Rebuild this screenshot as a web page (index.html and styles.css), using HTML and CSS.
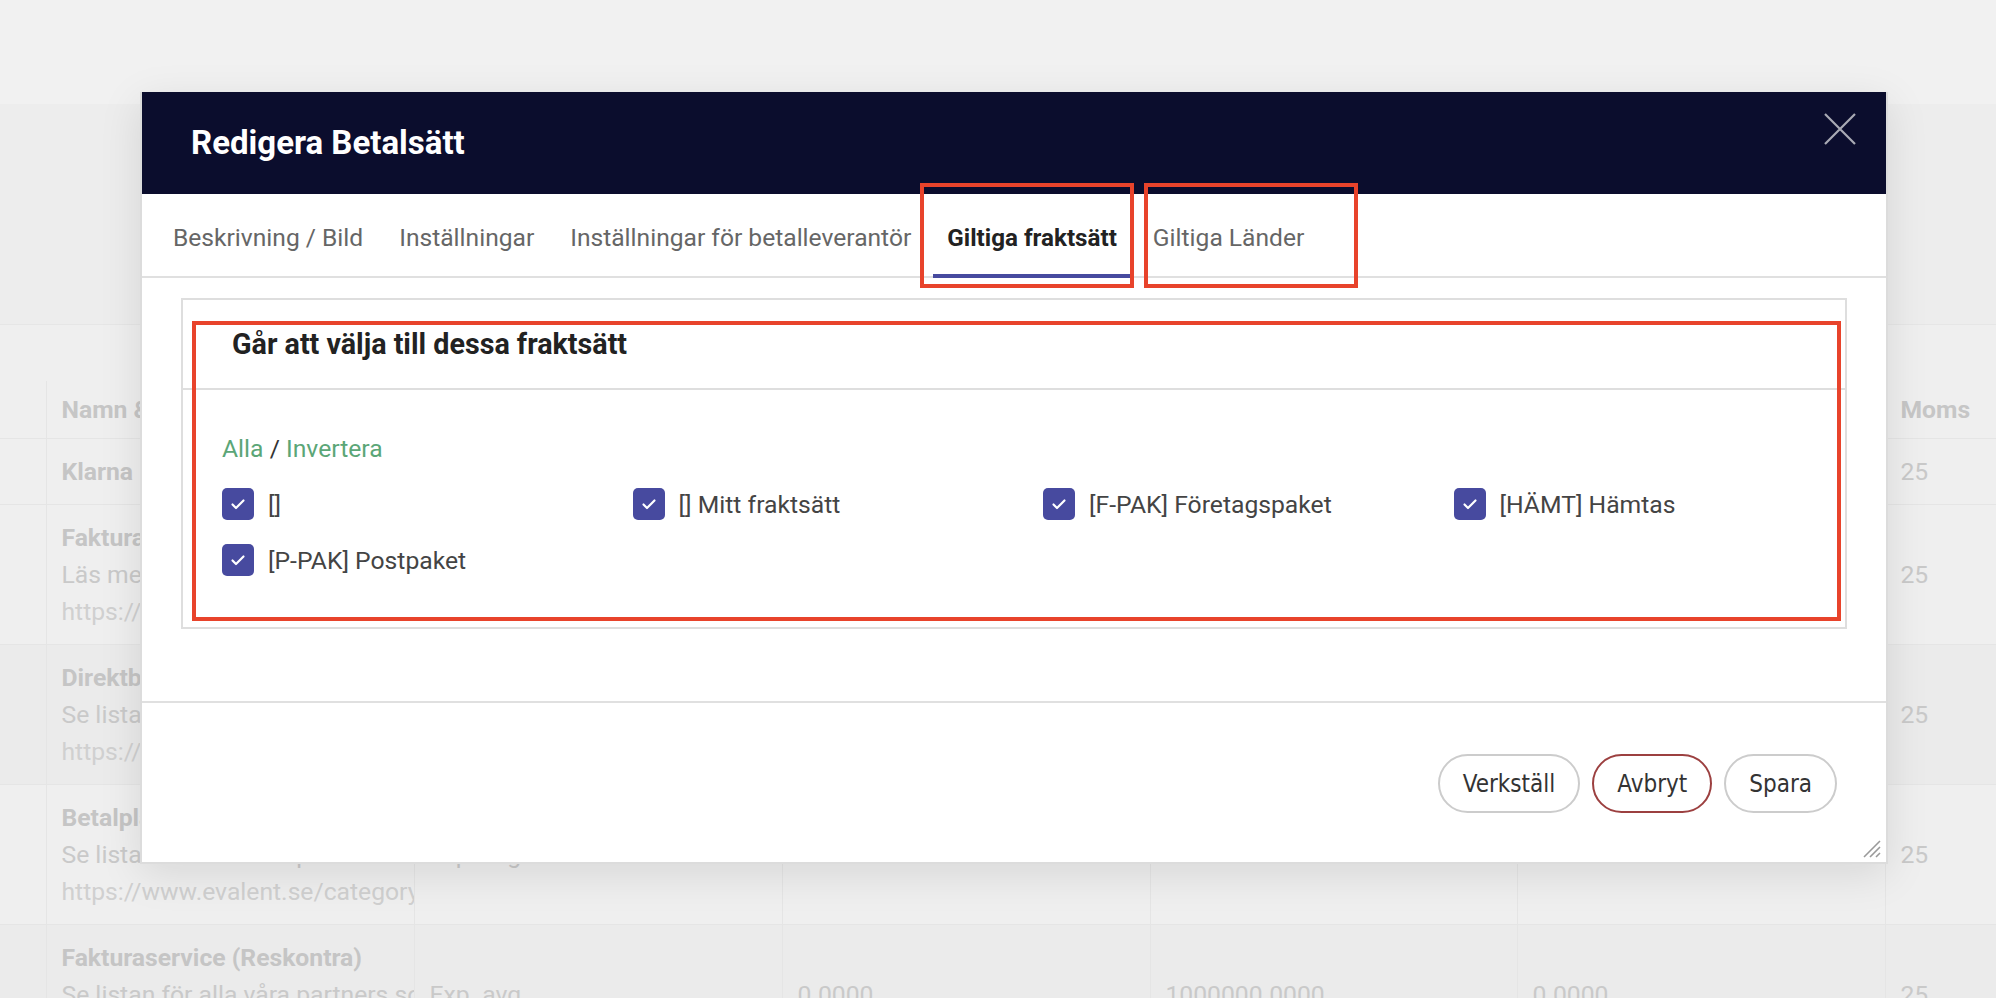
FILE: index.html
```html
<!DOCTYPE html>
<html lang="sv">
<head>
<meta charset="utf-8">
<title>Redigera Betalsätt</title>
<link rel="stylesheet" href="styles.css">
</head>
<body>
<div class="app">
  <div class="topbar"></div>
  <div class="band"></div>
  <div class="list">
    <table class="bg-table">
      <colgroup>
        <col class="c0"><col class="c1"><col class="c2"><col class="c3"><col class="c4"><col class="c5"><col class="c6">
      </colgroup>
      <tr class="head">
        <td></td><td>Namn &amp; beskrivning</td><td>Avgiftstyp</td><td>Min belopp</td><td>Max belopp</td><td>Avgift</td><td>Moms</td>
      </tr>
      <tr>
        <td></td><td><div class="name">Klarna</div></td><td>Exp. avg.</td><td>0.0000</td><td>1000000.0000</td><td>0.0000</td><td>25</td>
      </tr>
      <tr class="alt">
        <td></td><td><div class="name">Fakturabetalning</div><div class="desc">Läs mer om våra villkor</div><div class="url">https://www.evalent.se/villkor</div></td><td>Exp. avg.</td><td>0.0000</td><td>1000000.0000</td><td>0.0000</td><td>25</td>
      </tr>
      <tr class="dark">
        <td></td><td><div class="name">Direktbetalning</div><div class="desc">Se listan för alla våra partners som</div><div class="url">https://www.evalent.se/category</div></td><td>Exp. avg.</td><td>0.0000</td><td>1000000.0000</td><td>0.0000</td><td>25</td>
      </tr>
      <tr class="alt">
        <td></td><td><div class="name">Betalplan</div><div class="desc">Se listan för alla våra partners som</div><div class="url">https://www.evalent.se/category</div></td><td>Exp. avg.</td><td>0.0000</td><td>1000000.0000</td><td>0.0000</td><td>25</td>
      </tr>
      <tr class="dark">
        <td></td><td><div class="name">Fakturaservice (Reskontra)</div><div class="desc">Se listan för alla våra partners som</div><div class="url">https://www.evalent.se/category</div></td><td>Exp. avg.</td><td>0.0000</td><td>1000000.0000</td><td>0.0000</td><td>25</td>
      </tr>
    </table>
  </div>
</div>

<div class="modal">
  <div class="modal-head">
    <h1 class="modal-title">Redigera Betalsätt</h1>
    <button class="close" aria-label="Stäng">
      <svg width="32" height="32" viewBox="0 0 32 32"><path d="M1 1 L31 31 M31 1 L1 31" stroke="#a9aab4" stroke-width="2.2" fill="none"/></svg>
    </button>
  </div>
  <div class="tabs">
    <div class="tab">Beskrivning / Bild</div>
    <div class="tab">Inställningar</div>
    <div class="tab">Inställningar för betalleverantör</div>
    <div class="tab active">Giltiga fraktsätt</div>
    <div class="tab">Giltiga Länder</div>
  </div>
  <div class="modal-body">
    <div class="panel">
      <div class="panel-head">Går att välja till dessa fraktsätt</div>
      <div class="panel-body">
        <div class="links"><span class="link">Alla</span> / <span class="link">Invertera</span></div>
        <div class="checks">
          <label class="check"><span class="box"><svg width="32" height="32" viewBox="0 0 32 32"><path d="M10.5 16.5 L14 20 L21.5 12.5" stroke="#fff" stroke-width="2.2" fill="none" stroke-linecap="round" stroke-linejoin="round"/></svg></span><span class="lbl">[]</span></label>
          <label class="check"><span class="box"><svg width="32" height="32" viewBox="0 0 32 32"><path d="M10.5 16.5 L14 20 L21.5 12.5" stroke="#fff" stroke-width="2.2" fill="none" stroke-linecap="round" stroke-linejoin="round"/></svg></span><span class="lbl">[] Mitt fraktsätt</span></label>
          <label class="check"><span class="box"><svg width="32" height="32" viewBox="0 0 32 32"><path d="M10.5 16.5 L14 20 L21.5 12.5" stroke="#fff" stroke-width="2.2" fill="none" stroke-linecap="round" stroke-linejoin="round"/></svg></span><span class="lbl">[F-PAK] Företagspaket</span></label>
          <label class="check"><span class="box"><svg width="32" height="32" viewBox="0 0 32 32"><path d="M10.5 16.5 L14 20 L21.5 12.5" stroke="#fff" stroke-width="2.2" fill="none" stroke-linecap="round" stroke-linejoin="round"/></svg></span><span class="lbl">[HÄMT] Hämtas</span></label>
          <label class="check"><span class="box"><svg width="32" height="32" viewBox="0 0 32 32"><path d="M10.5 16.5 L14 20 L21.5 12.5" stroke="#fff" stroke-width="2.2" fill="none" stroke-linecap="round" stroke-linejoin="round"/></svg></span><span class="lbl">[P-PAK] Postpaket</span></label>
        </div>
      </div>
    </div>
  </div>
  <div class="modal-foot">
    <button class="btn">Verkställ</button>
    <button class="btn btn-cancel">Avbryt</button>
    <button class="btn">Spara</button>
  </div>
  <svg class="resize" width="20" height="20" viewBox="0 0 20 20"><path d="M19 3 L3 19 M19 9 L9 19 M19 15 L15 19" stroke="#9a9a9a" stroke-width="1.6" fill="none"/></svg>
</div>

<div class="mark mark-tab1"></div>
<div class="mark mark-tab2"></div>
<div class="mark mark-panel"></div>
</body>
</html>
```

FILE: styles.css
```css
* { box-sizing: border-box; }

html, body {
  margin: 0;
  padding: 0;
}

body {
  width: 1996px;
  height: 998px;
  overflow: hidden;
  position: relative;
  background: #eeeeee;
  font-family: Roboto, "Liberation Sans", sans-serif;
}

/* ---------- dimmed page behind the dialog ---------- */
.topbar {
  height: 104px;
  background: #f1f1f1;
}

.band {
  height: 221px;
  background: #ededed;
  border-bottom: 1px solid #e6e6e6;
}

.list {
  padding-top: 56px;
  background: #efefef;
}

.bg-table {
  width: 1996px;
  border-collapse: collapse;
  table-layout: fixed;
}

.c0 { width: 46px; }
.c1 { width: 368px; }
.c2 { width: 368px; }
.c3 { width: 368px; }
.c4 { width: 367px; }
.c5 { width: 368px; }
.c6 { width: 111px; }

.bg-table td {
  padding: 14px 15px;
  font-size: 24.7px;
  line-height: 37px;
  color: #c9c9c9;
  vertical-align: middle;
  white-space: nowrap;
  overflow: hidden;
  border-top: 1px solid #e5e5e5;
  border-left: 1px solid #e5e5e5;
}

.bg-table td:first-child { border-left: none; }

.bg-table .head td {
  padding: 10px 15px;
  font-weight: 700;
  color: #c6c6c6;
  border-top: none;
}

.bg-table tr.alt td { background: #efefef; }
.bg-table tr.dark td { background: #ebebeb; }

.name {
  font-weight: 700;
  color: #c5c5c5;
}

.desc { color: #c9c9c9; }
.url { color: #d0d0d0; }

/* ---------- dialog ---------- */
.modal {
  position: absolute;
  left: 140px;
  top: 92px;
  width: 1748px;
  height: 772px;
  background: #ffffff;
  border: 2px solid #dcdcdc;
  border-top: none;
  box-shadow: 0 10px 40px rgba(0, 0, 0, 0.10);
  display: flex;
  flex-direction: column;
}

.modal-head {
  flex: 0 0 102px;
  background: #0b0d2d;
  display: flex;
  justify-content: space-between;
  align-items: center;
  padding: 0 30px 0 49px;
}

.modal-title {
  margin: 0;
  color: #ffffff;
  font-size: 33px;
  font-weight: 700;
  line-height: 40px;
}

.close {
  align-self: flex-start;
  margin-top: 21px;
  padding: 0;
  border: none;
  background: none;
  width: 32px;
  height: 32px;
  display: block;
}

.close svg { display: block; }

.tabs {
  flex: 0 0 84px;
  display: flex;
  gap: 8px;
  padding-left: 17px;
  border-bottom: 2px solid #e0e0e0;
}

.tab {
  display: flex;
  align-items: center;
  padding: 7px 14px 0;
  margin-bottom: -2px;
  font-size: 24.6px;
  color: #666666;
  border-bottom: 4px solid transparent;
  white-space: nowrap;
}

.tab.active {
  color: #222222;
  font-weight: 700;
  font-size: 24.2px;
  border-bottom-color: #474a9f;
}

.modal-body {
  flex: 1 1 auto;
  padding: 20px 39px 0;
}

.panel {
  height: 331px;
  border: 2px solid #dedede;
}

.panel-head {
  height: 90px;
  border-bottom: 2px solid #dedede;
  padding-left: 49px;
  display: flex;
  align-items: center;
  font-size: 28.7px;
  font-weight: 700;
  color: #222222;
}

.panel-body {
  padding: 44px 0 0 39px;
}

.links {
  font-size: 24.7px;
  line-height: 30px;
  color: #333333;
}

.link { color: #5ba677; }

.checks {
  margin-top: 24px;
  display: grid;
  grid-template-columns: repeat(4, 410.5px);
  row-gap: 24px;
}

.check {
  display: flex;
  align-items: center;
  gap: 14px;
  height: 32px;
}

.box {
  width: 32px;
  height: 32px;
  border-radius: 5px;
  background: #474a9f;
  flex: 0 0 32px;
}

.box svg { display: block; }

.lbl {
  font-size: 24.7px;
  color: #444444;
  white-space: nowrap;
}

.modal-foot {
  flex: 0 0 161px;
  border-top: 2px solid #e0e0e0;
  display: flex;
  justify-content: flex-end;
  align-items: flex-start;
  gap: 12px;
  padding: 51px 49px 0 0;
}

.btn {
  height: 59px;
  padding: 0 23px;
  border-radius: 30px;
  border: 2px solid #cccccc;
  background: #ffffff;
  font-family: "DejaVu Sans Condensed", "DejaVu Sans", sans-serif;
  font-stretch: condensed;
  font-size: 24px;
  color: #333333;
}

.btn-cancel { border-color: #9c4040; }

.resize {
  position: absolute;
  right: 5px;
  bottom: 4px;
}

/* ---------- red annotation frames ---------- */
.mark {
  position: absolute;
  border: 4px solid #e8432b;
}

.mark-tab1 { left: 920px; top: 183px; width: 214px; height: 105px; }
.mark-tab2 { left: 1144px; top: 183px; width: 214px; height: 105px; }
.mark-panel { left: 192px; top: 321px; width: 1649px; height: 300px; }
```
